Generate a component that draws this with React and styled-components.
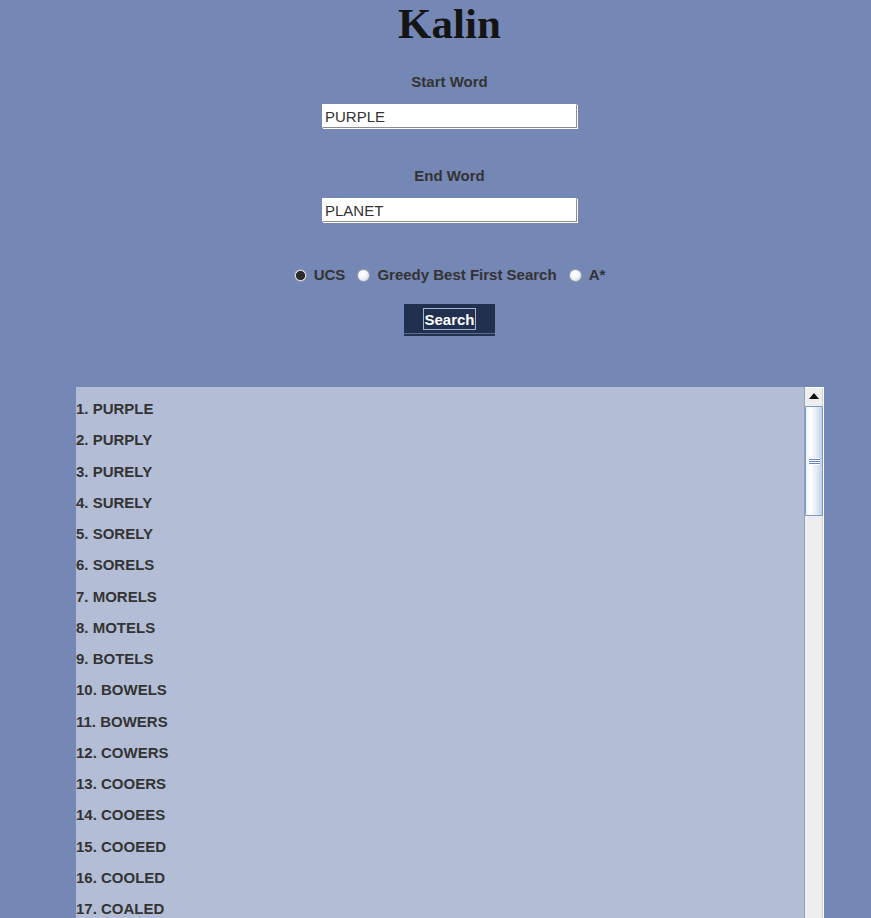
import React from 'react'
import styled, { createGlobalStyle } from 'styled-components'

const words = [
  'PURPLE', 'PURPLY', 'PURELY', 'SURELY', 'SORELY', 'SORELS', 'MORELS',
  'MOTELS', 'BOTELS', 'BOWELS', 'BOWERS', 'COWERS', 'COOERS', 'COOEES',
  'COOEED', 'COOLED', 'COALED',
]

const methods = [
  { id: 'ucs', label: 'UCS' },
  { id: 'greedy', label: 'Greedy Best First Search' },
  { id: 'astar', label: 'A*' },
]

function App () {
  return (
    <>
      <GlobalStyle />
      <Page>
        <Title>Kalin</Title>
        <FieldLabel $top={25}>Start Word</FieldLabel>
        <WordInput defaultValue='PURPLE' />
        <FieldLabel $top={39}>End Word</FieldLabel>
        <WordInput defaultValue='PLANET' />
        <RadioRow>
          {methods.map((m) => (
            <RadioOption key={m.id}>
              <RadioDot type='radio' name='method' defaultChecked={m.id === 'ucs'} />
              {m.label}
            </RadioOption>
          ))}
        </RadioRow>
        <SearchButton>
          <FocusRing>Search</FocusRing>
        </SearchButton>
        <ResultPanel>
          <ResultList>
            {words.map((w, i) => (
              <ResultItem key={w}>{i + 1}. {w}</ResultItem>
            ))}
          </ResultList>
          <ScrollBar>
            <ScrollUp>
              <svg width='10' height='6' viewBox='0 0 10 6'>
                <path d='M0 6 L5 0 L10 6 Z' fill='#111' />
              </svg>
            </ScrollUp>
            <ScrollThumb>
              <Grip>
                <span /><span /><span />
              </Grip>
            </ScrollThumb>
          </ScrollBar>
        </ResultPanel>
      </Page>
    </>
  )
}

export default App

const GlobalStyle = createGlobalStyle`
  html, body {
    margin: 0;
    padding: 0;
    background: #7587b5;
    overflow: hidden;
  }
`

// the form column is centred a little right of the window centre
const Page = styled.div`
  height: 918px;
  padding-left: 28px;
  display: flex;
  flex-direction: column;
  align-items: center;
  font-family: "Liberation Sans", Arial, sans-serif;
  color: #333;
  overflow: hidden;
`

const Title = styled.h1`
  margin: 0;
  height: 48px;
  line-height: 48px;
  font-family: "Liberation Serif", "Times New Roman", serif;
  font-size: 43px;
  font-weight: bold;
  color: #141414;
`

const FieldLabel = styled.div`
  margin-top: ${(p) => p.$top}px;
  line-height: 18px;
  font-size: 15px;
  font-weight: bold;
`

const WordInput = styled.input`
  box-sizing: border-box;
  margin-top: 13px;
  width: 255px;
  height: 24px;
  padding: 0 2px;
  border: 1px solid #fff;
  border-right-color: #8d8d8d;
  border-bottom-color: #8d8d8d;
  box-shadow: 1px 1px 0 #fff;
  background: #fff;
  font-family: "Liberation Sans", Arial, sans-serif;
  font-size: 15px;
  color: #333;
  outline: none;
`

const RadioRow = styled.div`
  margin-top: 44px;
  height: 18px;
  display: flex;
  align-items: center;
  gap: 12px;
  font-size: 15px;
  font-weight: bold;
`

const RadioOption = styled.label`
  display: flex;
  align-items: center;
  gap: 7px;
  line-height: 18px;
`

const RadioDot = styled.input`
  appearance: none;
  margin: 0;
  width: 13px;
  height: 13px;
  border-radius: 50%;
  border: 1px solid #9aa3b2;
  box-sizing: border-box;
  background: radial-gradient(circle at 40% 35%, #ffffff 0%, #f2f4f7 45%, #c7ccd6 100%);
  &:checked {
    background: radial-gradient(circle at 50% 50%, #2b2b2b 0%, #2b2b2b 55%, #d9dde4 62%, #c2c7d0 100%);
  }
`

const SearchButton = styled.button`
  margin-top: 20px;
  width: 91px;
  height: 29px;
  padding: 0;
  border: none;
  background: #22304f;
  box-shadow: 0 1px 0 #5c6b93, 0 3px 0 #26334f;
  display: flex;
  align-items: center;
  justify-content: center;
  cursor: pointer;
`

const FocusRing = styled.span`
  display: block;
  padding: 1px 0 0;
  line-height: 19px;
  border: 1px solid #a9b4cc;
  font-family: "Liberation Sans", Arial, sans-serif;
  font-size: 15px;
  font-weight: bold;
  color: #fff;
`

const ResultPanel = styled.div`
  margin-top: 54px;
  align-self: flex-start;
  margin-left: 48px;
  width: 748px;
  flex: 1;
  display: flex;
  min-height: 0;
`

const ResultList = styled.div`
  flex: 1;
  background: #b3bed6;
  padding-top: 6px;
  overflow: hidden;
`

const ResultItem = styled.div`
  height: 31.25px;
  line-height: 31.25px;
  font-size: 15px;
  font-weight: bold;
  color: #333;
`

const ScrollBar = styled.div`
  width: 18px;
  background: #eeeeee;
  border-left: 1px solid #8fa2b8;
  border-right: 1px solid #fff;
  box-shadow: inset -1px 0 0 #cfd3d8;
  display: flex;
  flex-direction: column;
`

const ScrollUp = styled.div`
  height: 18px;
  border-top: 1px solid #fff;
  box-sizing: border-box;
  display: flex;
  align-items: center;
  justify-content: center;
  padding-bottom: 1px;
`

const ScrollThumb = styled.div`
  margin-top: 1px;
  height: 110px;
  box-sizing: border-box;
  border: 1px solid #7d96cc;
  border-radius: 1px;
  background: linear-gradient(to right, #eef3fa 0%, #ffffff 30%, #dfe8f5 70%, #bfd0ea 100%);
  display: flex;
  align-items: center;
  justify-content: center;
`

const Grip = styled.div`
  display: flex;
  flex-direction: column;
  padding: 1px 0;
  background: #fff;
  & > span {
    display: block;
    width: 11px;
    height: 1px;
    background: #6a86c2;
  }
  & > span + span {
    margin-top: 1px;
  }
`
